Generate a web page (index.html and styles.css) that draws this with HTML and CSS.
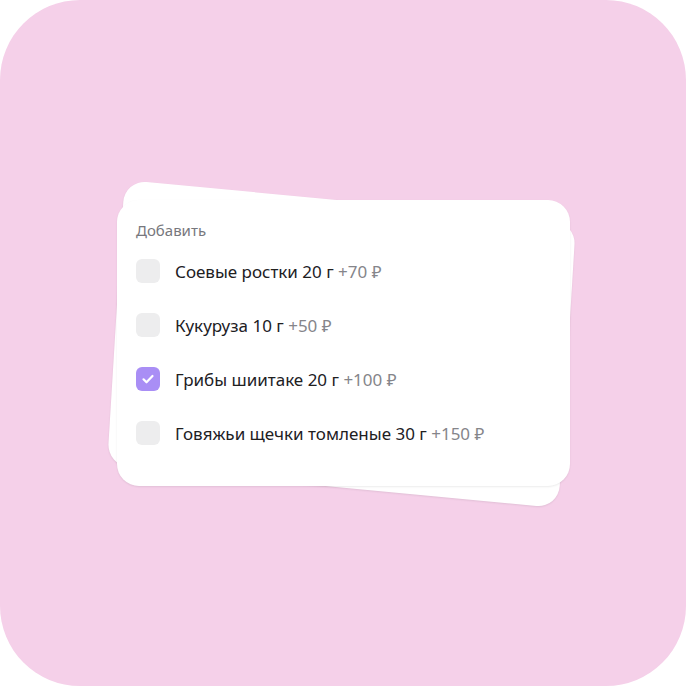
FILE: index.html
```html
<!DOCTYPE html>
<html lang=ru><head>
<meta charset=UTF-8>
<meta name=viewport content="width=device-width,initial-scale=1">
<title>Добавить</title><link rel="stylesheet" href="styles.css"></head><body>
<div class=frame>
<div class=stack>
<div class="card card-back"></div>
<div class=card>
<div class=title>Добавить</div>
<label class=row><span class=box></span><span class=name>Соевые ростки 20 г <span class=price>+70 ₽</span></span></label>
<label class=row><span class=box></span><span class=name>Кукуруза 10 г <span class=price>+50 ₽</span></span></label>
<label class=row><span class="box on"><svg viewBox="0 0 24 24" width=24 height=24><path d="M7.5 12.3l3 3 6-6.3" fill=none stroke=#fff stroke-width=2.2 stroke-linecap=round stroke-linejoin=round /></svg></span><span class=name>Грибы шиитаке 20 г <span class=price>+100 ₽</span></span></label>
<label class=row><span class=box></span><span class=name>Говяжьи щечки томленые 30 г <span class=price>+150 ₽</span></span></label>
</div>
</div>
</div>
</body></html>
```
FILE: styles.css
```css
body{margin:0;background:#fff;font-family:"Noto Sans","Open Sans",sans-serif}
.frame{width:686px;height:686px;background:#f5d0e9;border-radius:80px;display:flex;align-items:center;justify-content:center}
.stack{position:relative;width:453px;height:286px;margin-left:1px}
.card{position:relative;box-sizing:border-box;width:100%;height:100%;background:#fff;border-radius:22px;padding:20px 19px 0;box-shadow:0 1px 2px rgba(0,0,0,.08)}
.card-back{position:absolute;left:0;top:0;transform:translate(-2px,1px) rotate(3.5deg) skewY(1.9deg)}
.title{font-size:15px;line-height:20px;color:#77777d;margin-bottom:4px}
.row{display:flex;align-items:center;height:54px;gap:15px}
.box{width:24px;height:24px;border-radius:6px;background:#ededee;flex:none;display:flex}
.box.on{background:#a98ef5}
.name{font-size:17px;color:#21201f}
.price{color:#85858a}
```
